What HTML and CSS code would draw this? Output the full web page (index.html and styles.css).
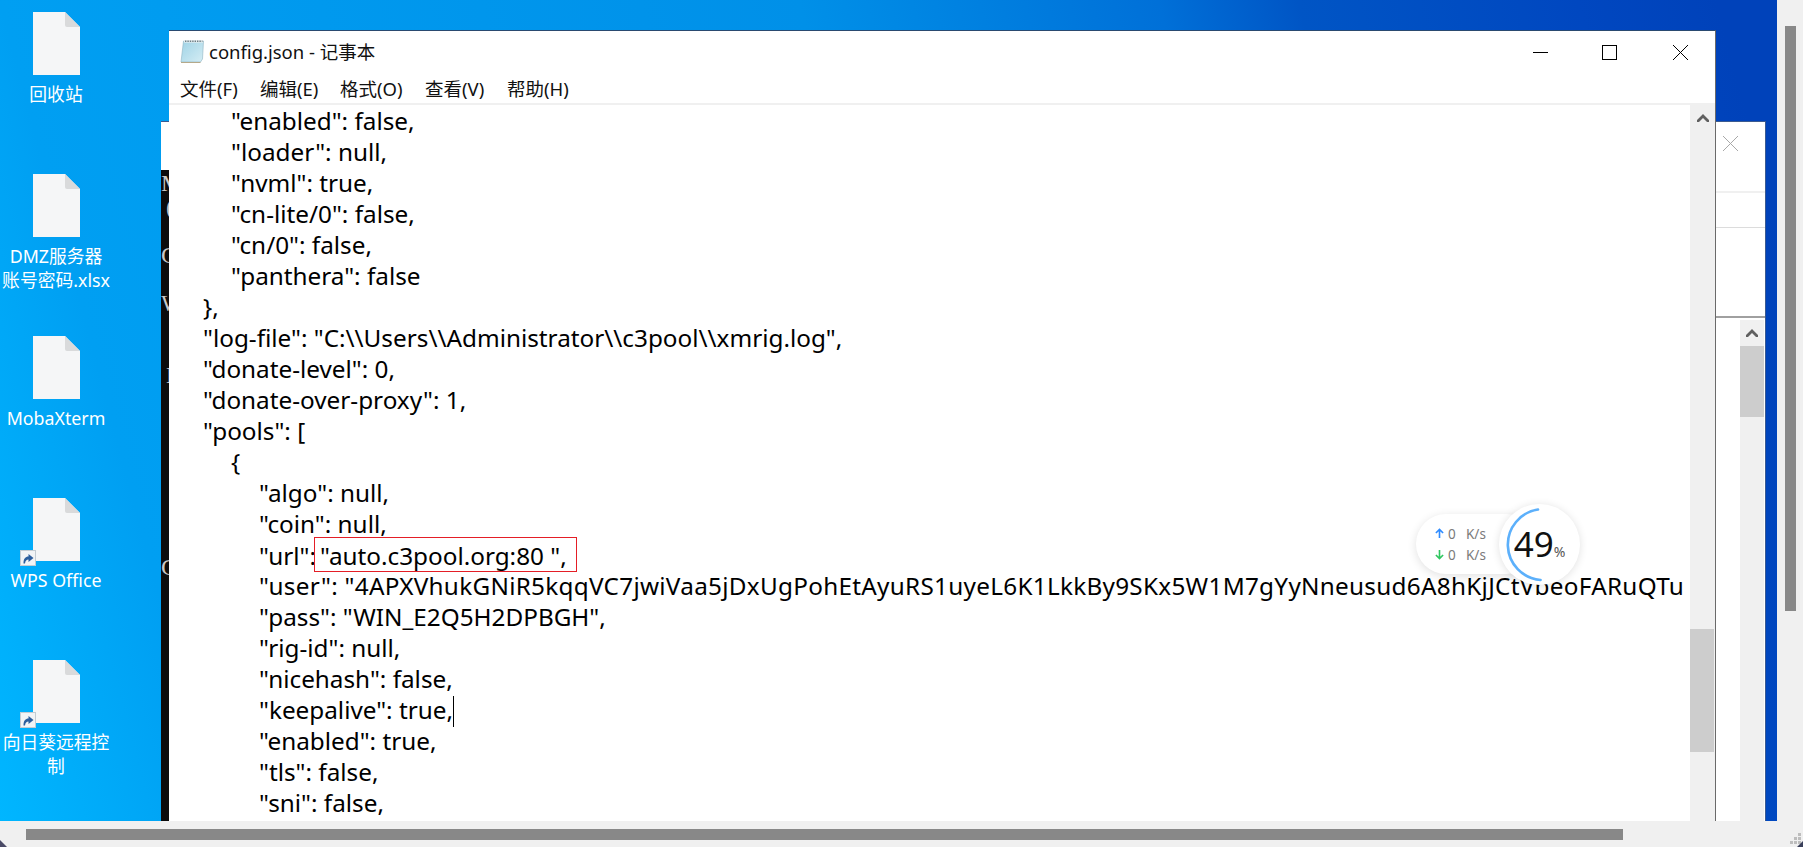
FILE: index.html
```html
<!DOCTYPE html>
<html lang="zh-CN">
<head>
<meta charset="utf-8">
<title>config.json - 记事本</title>
<link rel="stylesheet" href="styles.css">
</head>
<body>
<div class="screen">
  <div class="desktop">
    <div class="icons">
      <div class="icon"><div class="file"><svg class="page" viewBox="0 0 47 63"><path d="M0 0 H32 L47 15 V63 H0 Z" fill="#f5f6f7"/><path d="M32 0 L47 15 H34 Q32 15 32 13 Z" fill="#d9dadb"/></svg></div><div class="label">回收站</div></div>
      <div class="icon"><div class="file"><svg class="page" viewBox="0 0 47 63"><path d="M0 0 H32 L47 15 V63 H0 Z" fill="#f5f6f7"/><path d="M32 0 L47 15 H34 Q32 15 32 13 Z" fill="#d9dadb"/></svg></div><div class="label">DMZ服务器<br>账号密码.xlsx</div></div>
      <div class="icon"><div class="file"><svg class="page" viewBox="0 0 47 63"><path d="M0 0 H32 L47 15 V63 H0 Z" fill="#f5f6f7"/><path d="M32 0 L47 15 H34 Q32 15 32 13 Z" fill="#d9dadb"/></svg></div><div class="label">MobaXterm</div></div>
      <div class="icon"><div class="file"><svg class="page" viewBox="0 0 47 63"><path d="M0 0 H32 L47 15 V63 H0 Z" fill="#f5f6f7"/><path d="M32 0 L47 15 H34 Q32 15 32 13 Z" fill="#d9dadb"/></svg><svg class="shortcut" viewBox="0 0 16 16"><rect x="0.5" y="0.5" width="15" height="15" fill="#f2f4f6" stroke="#c4ccd2"/><path d="M3.5 13.5 C3.5 8.5 5.5 6.5 8.5 6.5 V4 L13.5 8 L8.5 12 V9.5 C6.5 9.5 5.5 10.5 5 13.5 Z" fill="#2d5f9e"/></svg></div><div class="label">WPS Office</div></div>
      <div class="icon"><div class="file"><svg class="page" viewBox="0 0 47 63"><path d="M0 0 H32 L47 15 V63 H0 Z" fill="#f5f6f7"/><path d="M32 0 L47 15 H34 Q32 15 32 13 Z" fill="#d9dadb"/></svg><svg class="shortcut" viewBox="0 0 16 16"><rect x="0.5" y="0.5" width="15" height="15" fill="#f2f4f6" stroke="#c4ccd2"/><path d="M3.5 13.5 C3.5 8.5 5.5 6.5 8.5 6.5 V4 L13.5 8 L8.5 12 V9.5 C6.5 9.5 5.5 10.5 5 13.5 Z" fill="#2d5f9e"/></svg></div><div class="label">向日葵远程控<br>制</div></div>
    </div>

    <div class="back-window">
      <div class="back-top">
        <svg class="back-close" viewBox="0 0 15 15"><path d="M0 0 L15 15 M15 0 L0 15" stroke="#a8a8a8" stroke-width="1" fill="none"/></svg>
      </div>
      <div class="back-tabs"></div>
      <div class="back-row"></div>
      <div class="back-body">
        <div class="console">
          <div class="con-line">M</div>
          <div class="con-line con-in">(</div>
          <div class="con-line"></div>
          <div class="con-line">C</div>
          <div class="con-line"></div>
          <div class="con-line">W</div>
          <div class="con-line"></div>
          <div class="con-line"></div>
          <div class="con-line con-in">L</div>
          <div class="con-line"></div>
          <div class="con-line"></div>
          <div class="con-line"></div>
          <div class="con-line"></div>
          <div class="con-line"></div>
          <div class="con-line"></div>
          <div class="con-line"></div>
          <div class="con-line">C</div>
        </div>
        <div class="back-scroll">
          <div class="sb-btn"><svg class="chev" viewBox="0 0 12 8"><path d="M0 6 L6 0 L12 6 L12 8 L10 8 L6 4 L2 8 L0 8 Z" fill="#606060"/></svg></div>
          <div class="sb-thumb-back"></div>
        </div>
      </div>
    </div>

    <div class="notepad">
      <div class="titlebar">
        <svg class="np-icon" viewBox="0 0 24 24">
          <defs><linearGradient id="npg" x1="0" y1="0" x2="1" y2="1"><stop offset="0" stop-color="#9fd3e6"/><stop offset="1" stop-color="#d5edf4"/></linearGradient></defs>
          <path d="M3.5 2 H23.5 L22.5 20 L20.5 23 H1 Z" fill="url(#npg)" stroke="#8fb4c2" stroke-width="0.6"/>
          <path d="M4 1 H23 V3.6 H4 Z" fill="#e8eef0"/>
          <path d="M5 2.2 H22.5" stroke="#6d7f86" stroke-width="1.6" stroke-dasharray="1.4 1"/>
          <path d="M1 23 H20.5 L20.5 24 H1 Z" fill="#b5a98a"/>
        </svg>
        <span class="np-title">config.json - 记事本</span>
        <div class="win-btns">
          <svg class="wb wb-min" viewBox="0 0 15 15"><path d="M0 7.5 H15" stroke="#000" stroke-width="1"/></svg>
          <svg class="wb wb-max" viewBox="0 0 15 15"><rect x="0.5" y="0.5" width="14" height="14" fill="none" stroke="#000" stroke-width="1"/></svg>
          <svg class="wb wb-close" viewBox="0 0 15 15"><path d="M0 0 L15 15 M15 0 L0 15" stroke="#000" stroke-width="1" fill="none"/></svg>
        </div>
      </div>
      <div class="menubar">
        <span class="menu m1">文件(F)</span>
        <span class="menu m2">编辑(E)</span>
        <span class="menu m3">格式(O)</span>
        <span class="menu m4">查看(V)</span>
        <span class="menu m5">帮助(H)</span>
      </div>
      <div class="client">
        <div class="editor">
          <div class="ln l2">"enabled": false,</div>
          <div class="ln l2">"loader": null,</div>
          <div class="ln l2">"nvml": true,</div>
          <div class="ln l2">"cn-lite/0": false,</div>
          <div class="ln l2">"cn/0": false,</div>
          <div class="ln l2">"panthera": false</div>
          <div class="ln l1">},</div>
          <div class="ln l1">"log-file": "C:\\Users\\Administrator\\c3pool\\xmrig.log",</div>
          <div class="ln l1">"donate-level": 0,</div>
          <div class="ln l1">"donate-over-proxy": 1,</div>
          <div class="ln l1">"pools": [</div>
          <div class="ln l2">{</div>
          <div class="ln l3">"algo": null,</div>
          <div class="ln l3">"coin": null,</div>
          <div class="ln l3">"url":<span class="boxed">"auto.c3pool.org:80 ",</span></div>
          <div class="ln l3 wide">"user": "4APXVhukGNiR5kqqVC7jwiVaa5jDxUgPohEtAyuRS1uyeL6K1LkkBy9SKx5W1M7gYyNneusud6A8hKjJCtVbeoFARuQTu</div>
          <div class="ln l3">"pass": "WIN_E2Q5H2DPBGH",</div>
          <div class="ln l3">"rig-id": null,</div>
          <div class="ln l3">"nicehash": false,</div>
          <div class="ln l3">"keepalive": true,<span class="caret"></span></div>
          <div class="ln l3">"enabled": true,</div>
          <div class="ln l3">"tls": false,</div>
          <div class="ln l3">"sni": false,</div>
        </div>
        <div class="np-scroll">
          <div class="sb-btn"><svg class="chev" viewBox="0 0 12 8"><path d="M0 6 L6 0 L12 6 L12 8 L10 8 L6 4 L2 8 L0 8 Z" fill="#606060"/></svg></div>
          <div class="sb-space"></div>
          <div class="sb-thumb-np"></div>
        </div>
      </div>

      <div class="speed">
        <div class="pill">
          <div class="rate"><svg class="arr" viewBox="0 0 10 12"><path d="M5 11 V2 M1 5.5 L5 1.5 L9 5.5" stroke="#2f8cff" stroke-width="1.8" fill="none"/></svg><span class="rv">0</span><span class="ru">K/s</span></div>
          <div class="rate"><svg class="arr" viewBox="0 0 10 12"><path d="M5 1 V10 M1 6.5 L5 10.5 L9 6.5" stroke="#2fc65f" stroke-width="1.8" fill="none"/></svg><span class="rv">0</span><span class="ru">K/s</span></div>
        </div>
        <div class="gauge">
          <svg class="ring" viewBox="0 0 80 80"><path d="M38.5 5.5 A35 35 0 0 0 41 75" fill="none" stroke="#5cb0fb" stroke-width="2.6" stroke-linecap="round"/></svg>
          <span class="pct">49</span><span class="pct-u">%</span>
        </div>
      </div>
    </div>
  </div>
  <div class="host-v"><div class="host-v-thumb"></div></div>
  <div class="host-h">
    <svg class="corner" viewBox="0 0 8 8"><path d="M0 1 L7 8 H0 Z" fill="#4a4a66"/></svg>
    <div class="host-h-thumb"></div>
    <svg class="grip" viewBox="0 0 14 14"><path d="M9 0h3v3H9z M5 4h3v3H5z M9 4h3v3H9z M1 8h3v3H1z M5 8h3v3H5z M9 8h3v3H9z" fill="#bdbdbd"/><path d="M14 8 V14 H8 Z" fill="#3a3f5a"/></svg>
  </div>
</div>
</body>
</html>
```

FILE: styles.css
```css
* { box-sizing: border-box; }
html, body { margin: 0; height: 100%; overflow: hidden; }
body { font-family: "Noto Sans", "Noto Sans CJK SC", sans-serif; }

.screen {
  position: relative;
  width: 1803px;
  height: 847px;
  background: #f0f0f0;
  overflow: hidden;
}
.desktop {
  position: absolute;
  left: 0; top: 0;
  width: 1777px;
  height: 821px;
  overflow: hidden;
  background: linear-gradient(75deg, #00b6ff 0%, #009ff2 11%, #0090e8 51%, #0070d8 69%, #0055c5 76%, #0047c0 90%, #0042ba 97%);
}

.icons { display: flex; flex-direction: column; width: 112px; padding-top: 12px; }
.icon { height: 162px; display: flex; flex-direction: column; align-items: center; color: #fff; }
.file { position: relative; width: 47px; height: 63px; flex-shrink: 0; }
.page { display: block; width: 47px; height: 63px; }
.shortcut { position: absolute; left: -13px; bottom: -5px; width: 16px; height: 16px; }
.label {
  margin-top: 7px;
  font-size: 17.8px;
  line-height: 24px;
  text-align: center;
  white-space: nowrap;
}

.back-window {
  position: absolute;
  left: 161px; top: 121px;
  width: 1605px;
  height: 700px;
  background: #fff;
  display: flex;
  flex-direction: column;
  border-right: 1px solid #3a5a90;
  border-top: 1px solid #3a5a90;
}
.back-top { height: 71px; position: relative; border-bottom: 2px solid #f0f0f0; }
.back-close { position: absolute; right: 27px; top: 14px; width: 15px; height: 15px; }
.back-tabs { height: 35px; border-bottom: 1px solid #dcdcdc; }
.back-row { height: 90px; border-bottom: 2px solid #a0a0a0; }
.back-body { flex: 1; display: flex; justify-content: space-between; background: #fff; min-height: 0; }
.console {
  position: absolute;
  left: 0; top: 48px;
  width: 8px;
  height: 652px;
  background: #0c0c0c;
  padding-top: 1px;
  overflow: hidden;
  font-family: "Liberation Serif", serif;
  font-size: 24px;
  line-height: 24px;
  color: #c8c8c8;
}
.con-line { height: 24px; white-space: pre; }
.con-in { padding-left: 5px; }
.back-scroll { position: absolute; right: 1px; top: 198px; width: 24px; height: 502px; background: #f0f0f0; }
.sb-btn { height: 26px; display: flex; align-items: center; justify-content: center; }
.chev { width: 12px; height: 8px; }
.sb-thumb-back { height: 71px; background: #cdcdcd; }

.notepad {
  position: absolute;
  left: 169px; top: 30px;
  width: 1547px;
  height: 791px;
  background: #fff;
  border-top: 1px solid #2a4a70;
  border-right: 1px solid #6a6a6a;
  display: flex;
  flex-direction: column;
}
.titlebar { height: 40px; position: relative; display: flex; align-items: center; flex-shrink: 0; }
.np-icon { width: 24px; height: 24px; margin-left: 11px; }
.np-title { margin-left: 5px; font-size: 18.5px; color: #111; white-space: nowrap; }
.win-btns { position: absolute; left: 0; top: 14px; width: 100%; height: 15px; }
.wb { position: absolute; top: 0; width: 15px; height: 15px; }
.wb-min { left: 1364px; }
.wb-max { left: 1433px; }
.wb-close { left: 1504px; }
.menubar { height: 34px; display: flex; align-items: center; padding: 2px 0 0 11px; font-size: 18.5px; color: #111; flex-shrink: 0; border-bottom: 2px solid #f0f0f0; }
.menu { white-space: nowrap; }
.m1 { width: 80px; }
.m2 { width: 80px; }
.m3 { width: 85px; }
.m4 { width: 82px; }

.client { flex: 1; display: flex; min-height: 0; }
.editor { flex: 1; min-width: 0; overflow: hidden; font-size: 24.3px; line-height: 31px; color: #000; }
.ln { height: 31px; white-space: pre; }
.wide { letter-spacing: 0.28px; }
.l1 { padding-left: 34px; }
.l2 { padding-left: 62px; }
.l3 { padding-left: 90px; }
.boxed { display: inline-block; height: 35px; line-height: 31px; padding: 2px 9px 0 5px; margin: -2px 0 -2px -2px; border: 1px solid #e41e26; }
.caret { display: inline-block; width: 1px; height: 31px; background: #000; vertical-align: top; margin-top: 2px; }
.np-scroll { width: 25px; flex-shrink: 0; background: #f0f0f0; display: flex; flex-direction: column; }
.sb-space { height: 498px; }
.sb-thumb-np { height: 123px; width: 24px; background: #cdcdcd; }

.speed { position: absolute; left: 1247px; top: 473px; width: 165px; height: 81px; }
.pill {
  position: absolute;
  left: 0; top: 10px;
  width: 120px; height: 60px;
  border-radius: 30px;
  background: #fff;
  box-shadow: 0 2px 10px rgba(0,0,0,0.12);
  padding: 9px 0 0 19px;
}
.rate { display: flex; align-items: center; height: 21px; font-size: 13.5px; color: #7a7a7a; }
.arr { width: 9px; height: 11px; }
.rv { margin-left: 4px; width: 18px; }
.gauge {
  position: absolute;
  left: 83px; top: 0;
  width: 81px; height: 81px;
  border-radius: 50%;
  background: #fff;
  box-shadow: 0 1px 8px rgba(0,0,0,0.12);
  display: flex;
  align-items: baseline;
  justify-content: center;
  padding-top: 16px;
  color: #111;
}
.ring { position: absolute; left: 0; top: 0; width: 81px; height: 81px; }
.pct { font-size: 35px; line-height: 48px; }
.pct-u { font-size: 14px; color: #555; }

.host-v { position: absolute; left: 1777px; top: 0; width: 26px; height: 821px; background: #f0f0f0; }
.host-v-thumb { margin: 26px 0 0 8px; width: 11px; height: 585px; background: #888; }
.host-h { position: absolute; left: 0; top: 821px; width: 1803px; height: 26px; background: #f0f0f0; }
.host-h-thumb { margin: 8px 0 0 26px; width: 1597px; height: 11px; background: #888; }
.corner { position: absolute; left: 0; bottom: 0; width: 8px; height: 8px; }
.grip { position: absolute; right: 0; bottom: 0; width: 14px; height: 14px; }
```
